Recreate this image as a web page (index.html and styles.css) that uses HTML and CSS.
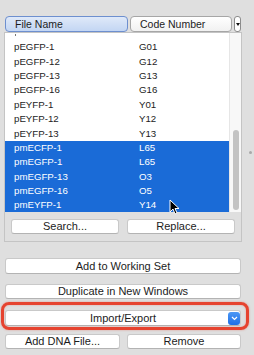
FILE: index.html
```html
<!DOCTYPE html>
<html lang="en">
<head>
    <meta charset="UTF-8">
    <meta name="viewport" content="width=device-width, initial-scale=1.0">
    <title>DNA Files</title>
    <link rel="stylesheet" href="styles.css">
</head>
<body>
    <div class="window">
        <div class="columns">
            <div class="col-head active">File Name</div>
            <div class="col-head code">Code Number</div>
            <div class="col-menu"><span class="tri"></span></div>
        </div>

        <div class="panel">
            <div class="list">
                <div class="rows">
                    <div class="row-clip"><span class="descender"></span></div>
                    <div class="row"><span class="name">pEGFP-1</span><span>G01</span></div>
                    <div class="row"><span class="name">pEGFP-12</span><span>G12</span></div>
                    <div class="row"><span class="name">pEGFP-13</span><span>G13</span></div>
                    <div class="row"><span class="name">pEGFP-16</span><span>G16</span></div>
                    <div class="row"><span class="name">pEYFP-1</span><span>Y01</span></div>
                    <div class="row"><span class="name">pEYFP-12</span><span>Y12</span></div>
                    <div class="row"><span class="name">pEYFP-13</span><span>Y13</span></div>
                    <div class="row selected"><span class="name">pmECFP-1</span><span>L65</span></div>
                    <div class="row selected"><span class="name">pmEGFP-1</span><span>L65</span></div>
                    <div class="row selected"><span class="name">pmEGFP-13</span><span>O3</span></div>
                    <div class="row selected"><span class="name">pmEGFP-16</span><span>O5</span></div>
                    <div class="row selected"><span class="name">pmEYFP-1</span><span>Y14</span></div>
                </div>
                <div class="scrollbar"><div class="thumb"></div></div>
            </div>
            <div class="pair">
                <button class="btn">Search...</button>
                <button class="btn">Replace...</button>
            </div>
        </div>

        <div class="actions">
            <button class="btn wide tall">Add to Working Set</button>
            <button class="btn wide dup">Duplicate in New Windows</button>
            <div class="popup-wrap">
                <button class="btn wide tall popup">Import/Export<span class="popup-arrow"><svg width="7" height="5" viewBox="0 0 7 5"><path d="M1 1 L3.5 3.5 L6 1" fill="none" stroke="#fff" stroke-width="1.2"/></svg></span></button>
            </div>
            <div class="pair bottom">
                <button class="btn">Add DNA File...</button>
                <button class="btn">Remove</button>
            </div>
        </div>

        <span class="splitter-dot"></span>
        <svg class="cursor" width="11" height="16" viewBox="0 0 11 16">
            <path d="M1 1 L1 13 L4 10 L6 15 L8 14 L6 9.5 L10 9.5 Z" fill="#000" stroke="#fff" stroke-width="1"/>
        </svg>
    </div>
</body>
</html>
```

FILE: styles.css
```css
body {
    margin: 0;
    background-color: #dfdfdf;
    font-family: "Liberation Sans", Arial, sans-serif;
    color: #1c1c1c;
}

.window {
    position: relative;
    width: 254px;
    height: 355px;
    overflow: hidden;
}

.columns {
    display: flex;
    gap: 2px;
    padding: 16px 0 0 5px;
    height: 16px;
    position: relative;
    z-index: 1;
}

.col-head {
    box-sizing: border-box;
    height: 16px;
    line-height: 14px;
    font-size: 10.5px;
    padding-left: 9px;
    border: 1px solid #a6a6a6;
    border-radius: 4px;
    background: linear-gradient(#ffffff, #f1f1f1);
}

.col-head.active {
    width: 123px;
    border-color: #6d8fcf;
    background: linear-gradient(#dfe9f9, #c3d6f3);
}

.col-head.code {
    width: 102px;
}

.col-menu {
    box-sizing: border-box;
    width: 7px;
    height: 16px;
    border: 1px solid #8c8c8c;
    border-radius: 3px;
    background: #fff;
    display: flex;
    align-items: center;
    justify-content: center;
}

.tri {
    width: 0;
    height: 0;
    border-left: 2px solid transparent;
    border-right: 2px solid transparent;
    border-top: 3px solid #111;
}

.panel {
    box-sizing: border-box;
    margin-left: 4px;
    width: 238px;
    height: 210px;
    border: 1px solid #c4c4c4;
}

.list {
    display: flex;
    height: 179px;
    overflow: hidden;
    background: #fff;
}

.rows {
    width: 224px;
}

/* bottom edge of the row scrolled out of view */
.row-clip {
    height: 6.2px;
    padding-left: 10px;
}

.descender {
    display: block;
    width: 1px;
    height: 2px;
    margin-top: 1px;
    background: #777;
}

.row {
    display: flex;
    height: 14.4px;
    line-height: 14.4px;
    font-size: 9.7px;
    padding-left: 9px;
}

.row .name {
    width: 125px;
}

.row.selected {
    background-color: #1a6bd7;
    color: #fff;
}

.scrollbar {
    box-sizing: border-box;
    width: 12px;
    border-left: 1px solid #e6e6e6;
    background: #f8f8f8;
    padding: 97px 1px 2px 3px;
}

.thumb {
    width: 6px;
    height: 80px;
    border-radius: 3px;
    background: #c3c3c3;
}

.pair {
    display: flex;
    gap: 8px;
    padding: 7px 0 0 6px;
}

.btn {
    box-sizing: border-box;
    height: 15px;
    padding: 0;
    border: 1px solid #c9c9c9;
    border-bottom-color: #b3b3b3;
    border-radius: 3px;
    background: #fff;
    font-family: "Liberation Sans", Arial, sans-serif;
    font-size: 11px;
    line-height: 13px;
    color: #1c1c1c;
}

.pair .btn {
    width: 108px;
}

.actions {
    display: flex;
    flex-direction: column;
    padding: 16px 0 0 5px;
    width: 236px;
}

.btn.wide {
    width: 236px;
}

.btn.tall {
    height: 16px;
    line-height: 14px;
}

.btn.dup {
    margin-top: 10px;
}

.popup-wrap {
    position: relative;
    margin-top: 9px;
    height: 16px;
}

.popup-wrap::after {
    content: "";
    position: absolute;
    top: -6px;
    left: -4px;
    right: -8px;
    bottom: -6px;
    border: 3px solid #e6432f;
    border-radius: 8px;
    box-shadow: 0 0 2px rgba(230, 67, 47, 0.5), inset 0 0 2px rgba(230, 67, 47, 0.4);
}

.popup {
    position: relative;
}

.popup-arrow {
    position: absolute;
    right: 0;
    top: 1px;
    width: 12px;
    height: 13px;
    border-radius: 3px;
    background: linear-gradient(#4b97f5, #1f6fe6);
    display: flex;
    align-items: center;
    justify-content: center;
}

.pair.bottom {
    padding: 10px 0 0 0;
    gap: 7px;
}

.pair.bottom .btn {
    width: 115px;
}

.pair.bottom .btn + .btn {
    width: 114px;
}

.splitter-dot {
    position: absolute;
    left: 249px;
    top: 151px;
    width: 3px;
    height: 3px;
    border-radius: 50%;
    background: #a9a9a9;
}

.cursor {
    position: absolute;
    left: 169px;
    top: 199px;
}
```
